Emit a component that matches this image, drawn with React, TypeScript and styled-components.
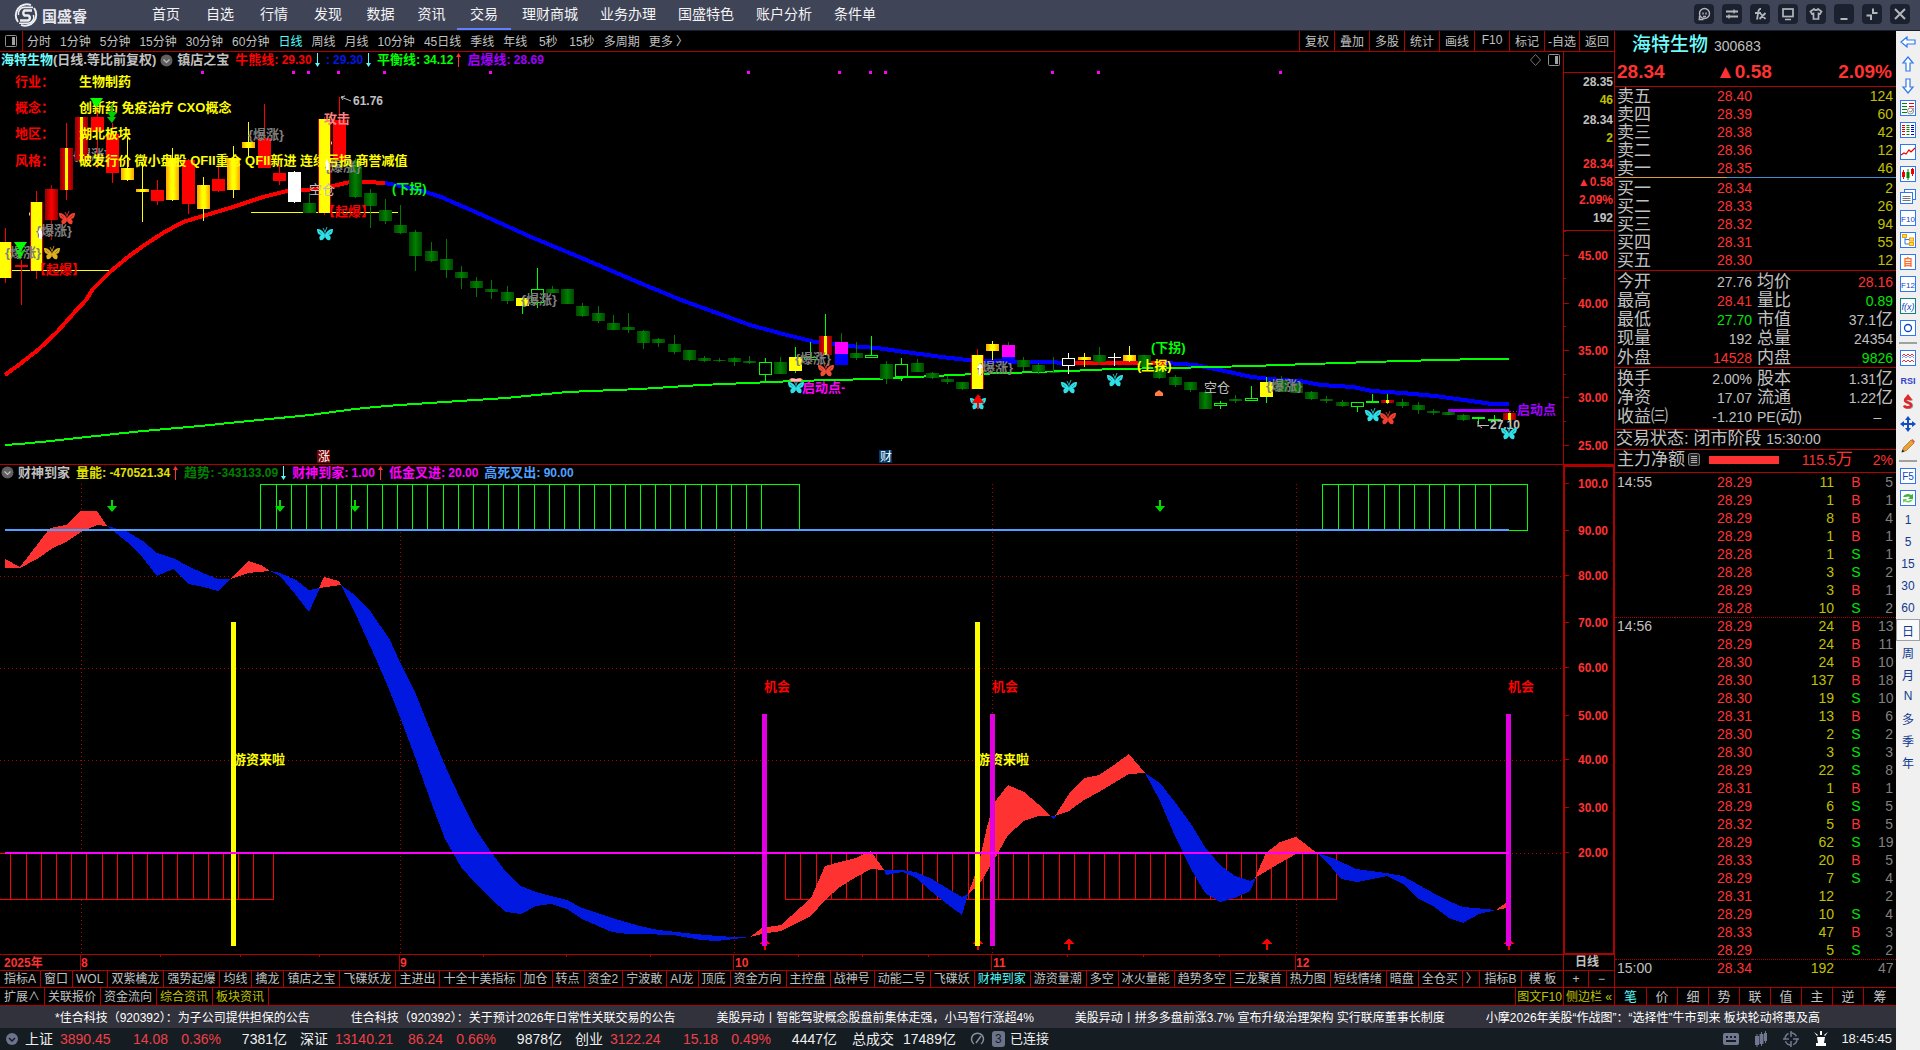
import React from 'react';
import styled, { createGlobalStyle, css } from 'styled-components';

const SANS = `"Liberation Sans", "Noto Sans CJK SC", sans-serif`;
const LINE = '#b00000';
const SILVER = '#c0c0c0';
const RED = '#ff3232';
const GREEN = '#00e600';
const YELLOW = '#c0c000';
const CYAN = '#54fcfc';

const GlobalStyle = createGlobalStyle`
  * { box-sizing: border-box; }
  body { margin: 0; background: #000; color: ${SILVER}; font-family: ${SANS}; font-size: 12px; }
  button, input { font: inherit; color: inherit; background: none; border: 0; padding: 0; margin: 0; cursor: pointer; }
  a { color: inherit; text-decoration: none; }
  svg { display: block; }
`;

/* ---------- shell ---------- */

const Page = styled.div`
  display: flex;
  flex-direction: column;
  min-height: 100vh;
  overflow: hidden;
`;
const Body = styled.div`
  display: flex;
  flex: 1;
`;
const Main = styled.main`
  display: flex;
  flex-direction: column;
  flex: 1;
  min-width: 0;
`;
const Workspace = styled.div`
  display: flex;
  flex: 1;
`;
const Charts = styled.section`
  flex: 1;
  min-width: 0;
  border-right: 1px solid ${LINE};
`;

/* ---------- title bar ---------- */

const TitleBar = styled.header`
  display: flex;
  align-items: center;
  height: 31px;
  background: #3f4456;
  border-bottom: 1px solid #1a1f30;
`;
const Brand = styled.div`
  display: flex;
  align-items: center;
  gap: 4px;
  width: 139px;
  padding-left: 14px;
  color: #e8e8ee;
  font-size: 15px;
  font-weight: 700;
`;
const Nav = styled.nav`
  display: flex;
  flex: 1;
  align-self: stretch;
`;
const NavLink = styled.a<{ $w: number; $on?: boolean }>`
  width: ${p => p.$w}px;
  line-height: 29px;
  height: 30px;
  text-align: center;
  white-space: nowrap;
  font-size: 14px;
  color: #f4f4f6;
  box-shadow: ${p => (p.$on ? 'inset 0 -2px #6080ff' : 'none')};
`;
const WindowTools = styled.div`
  display: flex;
  gap: 8px;
  padding: 0 10px 2px 0;
`;
const ToolButton = styled.button`
  display: grid;
  place-items: center;
  width: 20px;
  height: 20px;
  border-radius: 4px;
  background: #1c2130;
  color: #b4b6bc;
`;

/* ---------- period toolbar ---------- */

const Toolbar = styled.div`
  display: flex;
  height: 21px;
  border-bottom: 1px solid ${LINE};
`;
const PanelToggle = styled.button`
  display: grid;
  place-items: center;
  width: 23px;
  border-right: 1px solid ${LINE};
`;
const Periods = styled.div`
  display: flex;
  flex: 1;
  gap: 9px;
  padding-left: 4px;
  white-space: nowrap;
`;
const Period = styled.button<{ $on?: boolean }>`
  min-width: 24px;
  padding-bottom: 2px;
  color: ${p => (p.$on ? CYAN : SILVER)};
`;
const ToolCell = styled.button`
  width: 35px;
  padding-bottom: 2px;
  border-left: 1px solid ${LINE};
  text-align: center;
  white-space: nowrap;
`;

/* ---------- charts ---------- */

const ChartRow = styled.div`
  display: grid;
  grid-template-columns: minmax(0, 1fr) 51px;
  border-bottom: 1px solid ${LINE};
`;
const Plot = styled.div`
  svg.plot { width: 100%; height: auto; }
`;
const PlotHead = styled.div<{ $h: number }>`
  display: flex;
  align-items: center;
  gap: 6px;
  height: ${p => p.$h}px;
  padding: 0 0 2px 1px;
  font-size: 13px;
  font-weight: 700;
  line-height: 16px;
  white-space: nowrap;
`;
const PlotName = styled.span`
  display: flex;
  align-items: center;
  gap: 4px;
`;
const Spring = styled.span`
  flex: 1;
`;
const HeadTools = styled.span`
  display: flex;
  align-items: center;
  gap: 7px;
  padding-right: 3px;
`;
const Legend = styled.span<{ $c: string }>`
  display: inline-flex;
  align-items: center;
  gap: 3px;
  color: ${p => p.$c};
`;
const StockName = styled.span`
  color: #70fcfc;
`;
const LegendValue = styled.span`
  font-size: 12px;
`;
const AxisColumn = styled.div<{ $active?: boolean }>`
  border: 0 solid ${LINE};
  border-left-width: 1px;
  ${p => p.$active && css`border-width: 1px 0 0 1px; box-shadow: inset 0 0 0 1px ${LINE};`}
  svg.scale { width: 100%; height: auto; }
`;
const AxisGap = styled.div`
  height: 21px;
  border-bottom: 1px solid ${LINE};
`;
const AxisQuote = styled.div`
  height: 158px;
  border-bottom: 1px solid ${LINE};
  padding-right: 1px;
  text-align: right;
  font-weight: 700;
  line-height: 18px;
`;
const AxisValue = styled.div<{ $c: string; $gap?: number }>`
  color: ${p => p.$c};
  margin-top: ${p => p.$gap || 0}px;
`;
const PeriodName = styled.div`
  border-left: 1px solid ${LINE};
  padding-left: 11px;
  font-weight: 700;
  line-height: 15px;
`;

/* ---------- bottom tabs ---------- */

const TabRow = styled.div<{ $h: number }>`
  display: flex;
  height: ${p => p.$h}px;
  border-bottom: 1px solid ${LINE};
`;
const TabList = styled.div`
  display: flex;
  flex: 1;
  min-width: 0;
  overflow: hidden;
`;
const Tab = styled.button<{ $c?: string }>`
  flex: none;
  padding: 0 4px 0 3px;
  border-right: 1px solid ${LINE};
  line-height: 16px;
  white-space: nowrap;
  color: ${p => p.$c || SILVER};
  &:first-child { padding-left: 4px; }
`;
const EndTab = styled.button<{ $w: number; $c?: string }>`
  flex: none;
  width: ${p => p.$w}px;
  border-left: 1px solid ${LINE};
  line-height: 16px;
  text-align: center;
  white-space: nowrap;
  color: ${p => p.$c || SILVER};
`;

/* ---------- quote panel ---------- */

const Quote = styled.aside`
  display: flex;
  flex-direction: column;
  width: 281px;
`;
const QuoteHead = styled.div`
  height: 56px;
  border-bottom: 1px solid ${LINE};
`;
const NameLine = styled.h1`
  display: flex;
  align-items: baseline;
  gap: 6px;
  height: 27px;
  margin: 0;
  padding-left: 17px;
  line-height: 27px;
  font-size: 19px;
  font-weight: 500;
  color: #70fcfc;
`;
const Code = styled.span`
  font-size: 14px;
  font-weight: 400;
  color: ${SILVER};
`;
const PriceLine = styled.div`
  display: grid;
  grid-template-columns: 99px 1fr auto;
  padding: 0 4px 0 2px;
  line-height: 28px;
  font-size: 19px;
  font-weight: 700;
  color: ${RED};
`;
const Block = styled.div<{ $top?: number; $bottom?: number; $line?: boolean }>`
  padding: ${p => p.$top || 0}px 0 ${p => p.$bottom || 0}px;
  border-bottom: ${p => (p.$line ? `1px solid ${LINE}` : '0')};
`;
const Split = styled.div`
  display: flex;
  height: 1px;
  background: #4090d0;
`;
const SplitShare = styled.div`
  width: 40%;
  background: #e0a030;
`;
const Grid = styled.table<{ $row: number }>`
  width: 100%;
  table-layout: fixed;
  border-collapse: separate;
  border-spacing: 0;
  font-size: 14px;
  th, td {
    height: ${p => p.$row}px;
    padding: 0;
    line-height: ${p => p.$row - 1}px;
    text-align: right;
    white-space: nowrap;
    overflow: hidden;
  }
  td:last-child { padding-right: 3px; }
`;
const Label = styled.th`
  && { text-align: left; padding-left: 2px; }
  font-size: 17px;
  font-weight: 400;
`;
const Cell = styled.td<{ $c?: string }>`
  color: ${p => p.$c || SILVER};
`;
const SecondLabel = styled(Label)`
  && { padding-left: 5px; }
`;
const Unit = styled.span`
  font-size: 17px;
`;
const Latin = styled.span`
  font-size: 14px;
`;
const TickRow = styled.tr<{ $rule?: boolean }>`
  td { border-top: ${p => (p.$rule ? `1px dotted ${LINE}` : '0')}; }
`;
const TimeCell = styled(Cell)`
  && { text-align: left; padding-left: 2px; }
`;
const SideCell = styled(Cell)`
  && { text-align: center; }
`;
const StateLine = styled.div`
  padding-left: 1px;
  border-bottom: 1px solid ${LINE};
  height: 20px;
  line-height: 18px;
  font-size: 17px;
  white-space: nowrap;
`;
const FlowLine = styled.div`
  display: flex;
  align-items: center;
  height: 23px;
  padding: 0 3px 3px 2px;
  border-bottom: 1px solid ${LINE};
  font-size: 17px;
  line-height: 18px;
`;
const FlowIcon = styled.svg`
  margin-left: 3px;
`;
const FlowBar = styled.span`
  width: 70px;
  height: 8px;
  margin-left: 9px;
  background: ${RED};
`;
const FlowValue = styled.span`
  flex: 1;
  padding: 0 20px 0 0;
  text-align: right;
  color: ${RED};
`;
const FlowShare = styled.span`
  color: ${RED};
  font-size: 14px;
`;
const QuoteTabs = styled.div`
  display: grid;
  grid-template-columns: repeat(8, 31px) 1fr;
  height: 19px;
  margin-top: auto;
  border: solid ${LINE};
  border-width: 1px 0;
`;
const QuoteTab = styled.button<{ $on?: boolean }>`
  font-size: 13px;
  line-height: 16px;
  text-align: center;
  color: ${p => (p.$on ? CYAN : SILVER)};
  & + & { border-left: 1px solid ${LINE}; }
`;

/* ---------- footer ---------- */

const News = styled.div`
  display: flex;
  align-items: center;
  gap: 41px;
  height: 22px;
  padding: 0 0 2px 55px;
  overflow: hidden;
  background: #31323b;
  color: #fff;
  white-space: nowrap;
`;
const Status = styled.footer`
  display: flex;
  align-items: center;
  height: 22px;
  padding: 0 4px 0 5px;
  background: #151c22;
  color: #f0f0f0;
  font-size: 14px;
  line-height: 20px;
  white-space: nowrap;
`;
const IndexGroup = styled.div`
  display: grid;
  grid-template-columns: 35px 66px 42px 53px 1fr;
  align-items: baseline;
  width: 275px;
  text-align: right;
  padding-right: 13px;
`;
const Up = styled.span`
  color: #f04048;
`;
const IndexName = styled.span`
  text-align: left;
`;
const IndexPrice = styled(Up)`
  text-align: left;
`;
const StatusIcons = styled.div`
  display: flex;
  align-items: center;
  gap: 14px;
  margin-left: auto;
  margin-right: 12px;
  color: #707890;
`;
const Conn = styled.span`
  display: flex;
  align-items: center;
  gap: 4px;
  margin-left: 14px;
  font-size: 13px;
`;
const ConnCount = styled.span`
  width: 13px;
  height: 16px;
  margin: 0 1px 0 3px;
  border-radius: 3px;
  background: #6c748c;
  color: #151c22;
  font-size: 12px;
  line-height: 16px;
  text-align: center;
`;
const Total = styled.span`
  margin-left: 2px;
  margin-right: 9px;
`;
const Clock = styled.time`
  font-size: 13px;
`;

/* ---------- right rail ---------- */

const Rail = styled.nav`
  display: flex;
  flex-direction: column;
  width: 24px;
  background: #f0f0f0;
`;
const RailButton = styled.button<{ $on?: boolean }>`
  display: grid;
  place-items: center;
  height: 22px;
  color: #103a90;
  font-size: 12px;
  border: ${p => (p.$on ? '1px solid #a0a0a8' : '0')};
  background: ${p => (p.$on ? '#fafafa' : 'none')};
`;
const RailRule = styled.hr`
  width: 18px;
  height: 2px;
  margin: 3px auto;
  border: 0;
  background: #a0a0a0;
`;

/* ---------- price chart ---------- */

type Candle = [kind: string, high: number, low: number, top: number, bottom: number];

const candles: Candle[] = [
  ['Y', 228, 283, 242, 278], ['d', 260, 305, 265, 267], ['Y', 191, 279, 202, 271], ['R', 185, 240, 189, 220],
  ['S', 123, 200, 148, 190], ['S', 117, 161, 117, 161], ['r', 98, 168, 117, 132], ['r', 123, 183, 134, 173],
  ['y', 138, 181, 168, 180], ['y', 162, 222, 189, 192], ['r', 180, 205, 190, 201], ['y', 148, 201, 158, 200],
  ['r', 159, 214, 160, 204], ['y', 177, 221, 185, 209], ['r', 165, 192, 179, 191], ['y', 146, 198, 158, 190],
  ['y', 122, 158, 142, 148], ['r', 104, 168, 138, 168], ['r', 165, 185, 173, 181], ['w', 171, 203, 172, 202],
  ['g', 193, 213, 203, 213], ['Y', 117, 215, 119, 213], ['r', 97, 161, 120, 161], ['g', 158, 198, 161, 197],
  ['g', 189, 228, 193, 206], ['g', 199, 224, 210, 221], ['g', 205, 234, 225, 233], ['g', 230, 271, 232, 256],
  ['g', 242, 262, 251, 261], ['g', 239, 278, 259, 270], ['g', 266, 289, 272, 278], ['g', 277, 297, 281, 288],
  ['g', 280, 299, 289, 292], ['g', 286, 304, 292, 301], ['Z', 297, 314, 298, 306], ['G', 268, 308, 289, 303],
  ['g', 286, 293, 289, 293], ['g', 289, 304, 289, 304], ['g', 303, 317, 306, 316], ['g', 306, 323, 313, 321],
  ['g', 315, 330, 323, 330], ['g', 313, 333, 327, 330], ['g', 330, 349, 331, 343], ['g', 338, 347, 339, 343],
  ['g', 335, 354, 344, 352], ['g', 350, 361, 350, 360], ['g', 356, 362, 358, 361], ['g', 358, 362, 360, 361],
  ['g', 357, 366, 358, 362], ['g', 356, 364, 361, 363], ['G', 358, 381, 362, 375], ['g', 357, 374, 362, 374],
  ['Z', 347, 373, 357, 371], ['G', 342, 360, 357, 360], ['T', 314, 355, 336, 355], ['m', 333, 365, 342, 365],
  ['g', 342, 360, 353, 358], ['G', 336, 358, 355, 358], ['g', 361, 384, 364, 379], ['G', 358, 381, 364, 377],
  ['g', 359, 372, 363, 372], ['g', 372, 379, 373, 378], ['g', 376, 384, 379, 382], ['g', 382, 390, 382, 389],
  ['Y', 349, 389, 355, 389], ['y', 341, 360, 344, 351], ['m', 342, 362, 345, 362], ['g', 357, 371, 360, 367],
  ['g', 363, 374, 365, 372], ['g', 357, 373, 372, 373], ['W', 353, 374, 358, 366], ['y', 353, 367, 357, 360],
  ['g', 347, 365, 355, 362], ['c', 353, 366, 357, 358], ['y', 346, 362, 355, 361], ['g', 355, 367, 355, 367],
  ['g', 367, 379, 367, 378], ['g', 375, 387, 377, 385], ['g', 382, 392, 382, 390], ['g', 390, 409, 392, 409],
  ['G', 401, 409, 403, 406], ['g', 395, 403, 399, 401], ['G', 386, 401, 398, 401], ['Z', 377, 403, 382, 397],
  ['g', 376, 392, 380, 392], ['g', 383, 393, 383, 393], ['g', 391, 400, 392, 399], ['g', 396, 403, 399, 401],
  ['g', 400, 407, 402, 406], ['G', 402, 412, 402, 407], ['G', 394, 402, 401, 402], ['T', 394, 404, 400, 403],
  ['g', 399, 408, 402, 406], ['g', 402, 414, 405, 410], ['g', 409, 415, 411, 413], ['g', 410, 415, 412, 415],
  ['g', 414, 421, 415, 420], ['G', 417, 424, 417, 419], ['G', 415, 420, 419, 420], ['S', 411, 420, 413, 420],
];
const STEP = 15.185;
const candleX = (i: number) => Math.round(5.4 + i * STEP);

const fills: Record<string, string> = {
  r: '#f00', R: 'url(#cRed)', S: 'url(#cRed)', T: 'url(#cRed)', y: 'url(#cGold)', Y: '#ff0', Z: '#ff0', w: '#fff', g: 'url(#cGreen)',
  d: '#f00', c: '#fff', G: '#000', W: '#000', m: '#f0f',
};
const wicks: Record<string, string> = {
  r: '#f00', R: '#c00', S: '#f00', T: '#0f0', y: '#ff0', Y: '#f00', Z: '#0f0', w: '#fff', g: '#007800', d: '#f00', c: '#fff', G: '#0f0', W: '#fff', m: '#007800',
};

const CandleMark = ({ i, c }: { i: number; c: Candle }) => {
  const [k, hi, lo, top, bot] = c;
  const x = candleX(i);
  const hollow = k === 'G' || k === 'W';
  const h = Math.max(1, bot - top);
  return (
    <g shapeRendering="crispEdges">
      <rect x={x} y={hi} width={1} height={lo - hi} fill={wicks[k]} />
      {hollow ? (
        <rect x={x - 5.5} y={top + 0.5} width={12} height={Math.max(0.5, h - 1)} fill="#000" stroke={wicks[k]} />
      ) : (
        <rect x={x - 6} y={top} width={13} height={h} fill={fills[k]} />
      )}
      {k === 'Y' && <path d={`M${x - 5.5} ${top}v${h}M${x + 6.5} ${top}v${h}`} stroke="#c00" />}
      {(k === 'S' || k === 'T') && <rect x={x - 1} y={top} width={3} height={h} fill="#ff0" />}
      {k === 'm' && <rect x={x - 6} y={top + 12} width={13} height={h - 12} fill="#00f" />}
    </g>
  );
};

const Butterfly = ({ x, y, c }: { x: number; y: number; c: string }) => (
  <g transform={`translate(${x} ${y})`} fill={c}>
    <path d="M0 1C-2-4-5-5-8-5C-8-2-7 1-4 1C-6 2-6 4-5 6C-2 7 0 4 0 1Z" />
    <path d="M0 1C2-4 5-5 8-5C8-2 7 1 4 1C6 2 6 4 5 6C2 7 0 4 0 1Z" />
    <path d="M0 4V-2M0-2L-2-6M0-2L2-7" stroke={c} fill="none" opacity={0.8} />
    <path d="M-6-3L-3 0M6-3L3 0" stroke="#000" opacity={0.25} fill="none" />
  </g>
);

type NoteProps = { x: number; y: number; c: string; s?: number; w?: number; children: React.ReactNode };
const Note = ({ x, y, c, s = 13, w = 700, children }: NoteProps) => (
  <text x={x} y={y + 4} fill={c} fontSize={s} fontWeight={w} fontFamily={SANS}>{children}</text>
);

const surges = [[5, 253], [36, 231], [248, 135], [325, 167], [521, 300], [795, 359], [977, 368], [1266, 386]];
const dots = [202, 293, 308, 338, 384, 490, 748, 839, 870, 885, 1052, 1098, 1280];
const info: [string, string, number][] = [
  ['行业：', '生物制药', 82], ['概念：', '创新药 免疫治疗 CXO概念', 108], ['地区：', '湖北板块', 134],
  ['风格：', '破发行价 微小盘股 QFII重仓 QFII新进 连续亏损 商誉减值', 161],
];

const PriceChart = () => (
  <svg className="plot" viewBox="0 70 1563 394" role="img" aria-label="日线">
    <defs>
      <linearGradient id="cGreen"><stop offset="0" stopColor="#004800" /><stop offset=".5" stopColor="#008000" /><stop offset="1" stopColor="#004800" /></linearGradient>
      <linearGradient id="cRed"><stop offset="0" stopColor="#900000" /><stop offset=".5" stopColor="#f00" /><stop offset="1" stopColor="#900000" /></linearGradient>
      <linearGradient id="cGold"><stop offset="0" stopColor="#ffa000" /><stop offset=".4" stopColor="#ff0" /><stop offset=".6" stopColor="#ff0" /><stop offset="1" stopColor="#ffa000" /></linearGradient>
    </defs>
    {dots.map(x => <rect key={x} x={x - 1} y={71} width={3} height={3} fill="#f0f" />)}
    {info.map(([label, , y]) => <Note key={y} x={15} y={y} c="#f00">{label}</Note>)}
    <g fill="none" strokeLinejoin="round" shapeRendering="crispEdges">
      <path d="M11 270.5H110M251 212.5H398" stroke="#ff0" />
      <path stroke="#00f" strokeWidth={4} d="M385 183L416 189L441 197L480 214L531 237L584 259L640 283L681 300L717 313L750 325L783 334L815 342L848 346L877 348L905 352L942 357L975 361L1040 362L1074 363M1166 363L1195 365L1220 370L1252 377L1280 380L1300 381L1321 385L1353 387L1372 391L1402 393L1435 396L1464 400L1492 404L1509 404" />
      <path stroke="#f00" strokeWidth={4} d="M5 375L20 364L39 349L57 332L73 314L86 300L93 289L110 272L128 257L143 246L163 233L183 222L203 216L233 207L263 197L287 191L307 190L333 186L350 182L367 182L385 183M1074 363H1166" />
      <path stroke="#0f0" strokeWidth={2} d="M5 445L20 444L51 441L96 436L143 431L200 426L249 421L310 415L355 409L386 406L429 403L506 398L567 392L640 389L701 385L795 381L873 379L975 374L1069 371L1113 369L1171 368L1252 366L1280 365L1341 363L1402 361L1480 359H1509" />
      <path stroke="#a000ff" strokeWidth={3} d="M1448 410.5H1509" />
    </g>
    <Note x={73} y={155} c="#808080">{'{爆涨}'}</Note>
    <g fill="#fff">
      <ellipse cx={36} cy={214} rx={7} ry={4} /><ellipse cx={325} cy={143} rx={7} ry={4} />
    </g>
    {candles.map((c, i) => <CandleMark key={i} i={i} c={c} />)}
    {surges.map(([x, y]) => <Note key={x} x={x} y={y} c="#808080">{'{爆涨}'}</Note>)}
    {info.map(([, text, y]) => <Note key={y} x={79} y={y} c="#ff0">{text}</Note>)}
    <g fill="#fff">
      <path d="M38 232l2-4 2 4v7h-3v-5zM325 163l2-4 2 4v7h-3v-5zM977 368l3-5 3 5h-2v7h-2v-7z" />
    </g>
    <Note x={33} y={270} c="#f00">【起爆】</Note>
    <Note x={322} y={212} c="#f00">【起爆】</Note>
    <Note x={309} y={190} c={SILVER} w={400}>空仓</Note>
    <Note x={1204} y={388} c={SILVER} w={400}>空仓</Note>
    <Note x={392} y={189} c="#0f0">(下拐)</Note>
    <Note x={1151} y={348} c="#0f0">(下拐)</Note>
    <Note x={1137} y={366} c="#ff0">(上探)</Note>
    <Note x={324} y={119} c="#ff8080">攻击</Note>
    <Note x={353} y={101} c={SILVER} s={12}>61.76</Note>
    <path d="M351 101L341 97M341 97l4-1M341 97l2 3" stroke={SILVER} fill="none" />
    <Note x={802} y={388} c="#f0f">启动点-</Note>
    <Note x={1517} y={410} c="#a000ff">启动点</Note>
    <path d="M1510 411.5H1517" stroke="#a000ff" strokeDasharray="1 2" />
    <Note x={1490} y={425} c={SILVER} s={12}>27.10</Note>
    <path d="M1489 425.5H1478M1478 421v6M1478 425l4 3" stroke={SILVER} fill="none" />
    <rect x={317} y={450} width={13} height={13} fill="#780000" />
    <Note x={318} y={457} c="#fff" s={12} w={400}>涨</Note>
    <rect x={879} y={450} width={13} height={13} fill="#003868" />
    <Note x={880} y={457} c="#fff" s={12} w={400}>财</Note>
    <g fill="#0f0">
      <path d="M90 98h13l-6 9h-1zM14 242h13l-6 9h-1z" />
      <path d="M15 248l5 12 6-12-5 4z" opacity={0.85} />
      <path d="M111 105h2v7h4l-5 7-5-7h4zM107 117h9l-4 6z" fill="#00d000" />
    </g>
    <Butterfly x={325} y={234} c="#30e0e8" />
    <Butterfly x={67} y={218} c="#f04030" />
    <Butterfly x={52} y={253} c="#e0b020" />
    <Butterfly x={826} y={370} c="#f05038" />
    <Butterfly x={1388} y={418} c="#f04030" />
    {[[796, 387], [978, 403], [1069, 387], [1115, 380], [1373, 415], [1509, 433]].map(([x, y]) => <Butterfly key={x} x={x} y={y} c="#30e0e8" />)}
    <path d="M978 394l6 9h-5v6h-2v-6h-5z" fill="#f00" />
    <path d="M1159 390l4 3v3h-8v-3z" fill="#ff8040" />
    <path d="M789 380c2-3 5-2 7-1c2-1 5-2 7 1c-4 3-10 3-14 0z" fill="#ff8080" />
    <path d="M791 380h10" stroke="#fff" />
  </svg>
);

type ScaleMark = [y: number, label?: string];
const priceMarks: ScaleMark[] = [[232], [256, '45.00'], [279], [304, '40.00'], [327], [351, '35.00'], [375], [398, '30.00'], [422], [446, '25.00']];
const oscMarks: ScaleMark[] = [[484, '100.0'], [531, '90.00'], [576, '80.00'], [623, '70.00'], [668, '60.00'], [716, '50.00'], [760, '40.00'], [808, '30.00'], [853, '20.00']];

const Scale = ({ top, height, marks }: { top: number; height: number; marks: ScaleMark[] }) => (
  <svg className="scale" viewBox={`0 ${top} 50 ${height}`}>
    {marks.map(([y, label]) => (
      <g key={y}>
        <path d={`M0 ${y - 0.5}h${label ? 5 : 2}`} stroke={LINE} />
        {label && <Note x={14} y={y} c={RED} s={12}>{label}</Note>}
      </g>
    ))}
  </svg>
);

/* ---------- oscillator ---------- */

const upBands = [
  '5,559 20,567 50,528 66,525 81,511 97,511 107,526 97,525 81,532 66,542 53,548 37,559 20,568 5,568',
  '231,579 248,561 261,565 270,571 248,573',
  '319,588 324,577 339,581 341,585 326,587',
  '750,937 762,928 781,925 811,898 825,866 840,862 856,858 871,851 884,870 871,869 856,877 840,887 825,900 811,916 795,924 781,931 762,934',
  '968,894 978,867 987,827 994,803 1008,785 1024,792 1038,804 1050,816 1038,816 1024,821 1008,835 994,860 979,885',
  '1055,816 1069,794 1084,778 1099,775 1114,765 1129,754 1145,773 1129,774 1114,783 1099,792 1084,800 1069,811',
  '1255,878 1266,853 1280,842 1296,837 1317,853 1296,854 1280,863',
  '1496,910 1507,902 1507,908',
];
const downBands = [
  '107,526 126,531 143,541 157,553 173,558 188,566 203,573 218,579 231,579 218,591 203,587 188,584 173,569 157,576 143,558 127,542 112,530',
  '270,571 280,573 296,580 309,590 320,588 309,612 295,594 280,576',
  '341,585 355,595 371,612 390,640 400,662 415,692 431,732 447,770 461,800 475,828 491,852 506,872 521,886 536,892 551,896 567,900 582,908 612,918 640,926 658,930 685,933 717,936 734,937 750,937 734,939 717,941 701,940 673,935 640,934 628,934 612,932 598,926 582,919 567,909 551,904 536,906 521,914 506,912 491,899 475,883 461,867 445,839 431,802 415,757 400,717 386,682 371,648 355,613',
  '884,870 901,870 916,872 932,879 947,888 962,897 968,894 962,915 947,904 932,892 916,878 903,872 886,875',
  '1050,816 1053,819 1056,816',
  '1145,773 1160,783 1175,802 1191,824 1205,847 1220,865 1235,876 1250,881 1256,878 1250,891 1235,898 1220,902 1205,893 1191,869 1175,836 1160,801',
  '1317,853 1335,859 1356,869 1386,873 1403,876 1419,885 1435,894 1449,901 1463,907 1496,910 1479,914 1463,923 1449,918 1433,906 1417,898 1403,884 1387,876 1357,882 1341,879 1327,862',
];
const posts = (from: number, count: number, y: number) =>
  Array.from({ length: count }, (_, k) => `M${Math.round(from + k * STEP) + 0.5} ${y}v46`).join('');
const upArrow = (x: number) => `M${x} 938l5 6h-4v6h-2v-6h-4z`;
const downArrow = (x: number) => `M${x - 1} 500h2v6h4l-5 6l-5-6h4z`;

const Oscillator = () => (
  <svg className="plot" viewBox="0 482 1563 472" role="img" aria-label="财神到家">
    <g shapeRendering="crispEdges" fill="none">
      <path stroke={LINE} strokeDasharray="1 3" d="M0 576.5H1563M0 668.5H1563M0 760.5H1563M0 853.5H1563M81.5 484V954M400.5 484V954M734.5 484V954M992.5 484V954M1296.5 484V954" />
      <path fill="#000" stroke="#0f0" d="M260.5 484.5H799.5V530.5H260.5ZM1322.5 484.5H1527.5V530.5H1322.5Z" />
      <path stroke="#0f0" d={posts(275.5, 33, 484) + posts(1338, 11, 484)} />
      <path stroke="#f00" fill="#000" d="M-1 853.5H273.5V899.5H-1ZM785.5 853.5H1336.5V899.5H785.5Z" />
      <path stroke="#f00" d={posts(10.4, 17, 853) + posts(785.3, 36, 853)} />
    </g>
    <g shapeRendering="crispEdges">
      <path d={[765, 978, 1069, 1267, 1509].map(upArrow).join('')} fill="#f00" />
      {upBands.map(p => <polygon key={p} points={p} fill={RED} />)}
      {downBands.map(p => <polygon key={p} points={p} fill="#0018e0" />)}
      <rect x={5} y={529} width={1504} height={2} fill="#50a0ff" />
      <rect x={762} y={714} width={5} height={232} fill="#e000e0" />
      <rect x={990} y={714} width={5} height={232} fill="#e000e0" />
      <rect x={1506} y={714} width={5} height={232} fill="#e000e0" />
      <rect x={231} y={622} width={5} height={324} fill="#ff0" />
      <rect x={975} y={622} width={5} height={324} fill="#ff0" />
      <rect x={5} y={852} width={1504} height={2} fill="#f0f" />
    </g>
    <path d={[112, 280, 355, 1160].map(downArrow).join('')} fill="#00d800" />
    {[764, 992, 1508].map(x => <Note key={x} x={x} y={687} c="#f00">机会</Note>)}
    {[233, 977].map(x => <Note key={x} x={x} y={760} c="#ff0">游资来啦</Note>)}
    <rect x={990} y={752} width={5} height={16} fill="#e000e0" />
  </svg>
);

const DateScale = () => (
  <svg className="plot" viewBox="0 955 1563 15">
    <path stroke={LINE} d="M80.5 955v15M399.5 955v15M733.5 955v15M991.5 955v15M1295.5 955v15M160.5 955v2M240.5 955v2M319.5 955v2M483.5 955v2M566.5 955v2M650.5 955v2M798.5 955v2M862.5 955v2M928.5 955v2M1067.5 955v2M1143.5 955v2M1219.5 955v2" />
    <Note x={4} y={963} c={RED} s={12}>2025年</Note>
    {([[81, '8'], [400, '9'], [735, '10'], [993, '11'], [1296, '12']] as [number, string][]).map(([x, t]) => <Note key={t} x={x} y={963} c={RED} s={12}>{t}</Note>)}
  </svg>
);

/* ---------- small glyphs ---------- */

const PaneIcon = () => (
  <svg width="12" height="12" viewBox="0 0 12 12"><rect x="0.5" y="0.5" width="11" height="11" rx="1" fill="none" stroke="#909090" /><rect x="7" y="2" width="3" height="8" fill="#a0a0a0" /></svg>
);
const FoldIcon = () => (
  <svg width="13" height="13" viewBox="0 0 13 13"><circle cx="6.5" cy="6.5" r="6" fill="#606060" /><path d="M3.5 5.5l3 3 3-3" stroke="#c0c0c0" fill="none" strokeWidth="1.2" /></svg>
);
const Arrow = ({ up }: { up?: boolean }) => (
  <svg width="5" height="14" viewBox="0 0 5 14">
    <path d={up ? 'M2.5 14V3' : 'M2.5 0V11'} stroke={up ? RED : CYAN} />
    <path d={up ? 'M0 4h5L2.5 0z' : 'M0 10h5L2.5 14z'} fill={up ? RED : CYAN} />
  </svg>
);

const LogoMark = () => (
  <svg width="24" height="24" viewBox="0 0 24 24" fill="none" stroke="#eceef2">
    <path d="M17 2.2A11 11 0 0 0 4 19M7 21.8A11 11 0 0 0 20 5" strokeWidth="2" />
    <path d="M18 7.5H10.5a3.2 3.2 0 0 0 0 5H14a2.6 2.6 0 0 1 0 5H6" strokeWidth="2.4" />
    <path d="M19 4.4H10A6 6 0 0 0 4.6 12M5 20.2H14A6 6 0 0 0 19.4 12" strokeWidth="1.6" />
  </svg>
);

const windowIcons: [string, React.ReactNode][] = [
  ['客服', <><circle cx="7.5" cy="6.5" r="5" /><path d="M1.500 12.500h5M2.500 9v3.500M6 5.500v2M9 5.500v2M6 9.500h3" /></>],
  ['设置', <><path d="M1 4.5h12M1 9.5h12" strokeWidth="2" /><path d="M9 2.5v4M4 7.5v4" /></>],
  ['公式', <><path d="M8 2C5 1.500 5.500 5 4 12.500M2 6H8M7 6l5.500 6M12.500 6L6.500 12" strokeWidth="1.800" /></>],
  ['屏幕', <><rect x="2" y="2" width="10" height="7.500" strokeWidth="1.700" /><path d="M4 12.500h6" strokeWidth="1.500" /></>],
  ['皮肤', <><path d="M5 2L1.500 4.500 3 7l1.500-.500V12h5V6.500L11 7l1.500-2.500L9 2C8 3.500 6 3.500 5 2z" strokeWidth="1.700" /></>],
  ['最小化', <><path d="M3.500 12h7" strokeWidth="2" /></>],
  ['还原', <><path d="M6 13V8.500H1.500M8 1.500V6H12.500" strokeWidth="2" /></>],
  ['关闭', <><path d="M2 2l10 10M12 2L2 12" strokeWidth="2" /></>],
];

const Frame = ({ c = '#3078f0', children }: { c?: string; children: React.ReactNode }) => (
  <svg width="16" height="16" viewBox="0 0 16 16"><rect x="0.5" y="0.5" width="15" height="15" fill="#fff" stroke={c} />{children}</svg>
);
const Plain = ({ children }: { children: React.ReactNode }) => <svg width="16" height="16" viewBox="0 0 16 16">{children}</svg>;
const FrameText = ({ c = '#1048c0', w = 400, children }: { c?: string; w?: number; children: string }) => (
  <text x="8" y="12" fontSize={children.length > 2 ? 8 : 10} fontFamily={SANS} fontWeight={w} fill={c} textAnchor="middle">{children}</text>
);
const arrowOutline = { fill: '#fff', stroke: '#3078f0', strokeWidth: 1.2 };
const railIcons: ([string, React.ReactNode] | null)[] = [
  ['后退', <Plain><path d="M1 8l6-5v3h8v4H7v3z" {...arrowOutline} /></Plain>],
  ['上翻', <Plain><path d="M8 1l5 6h-3v8H6V7H3z" {...arrowOutline} /></Plain>],
  ['下翻', <Plain><path d="M8 15l5-6h-3V1H6v8H3z" {...arrowOutline} /></Plain>],
  ['报价', <Frame><path d="M2 3.500h5M2 6.500h5M2 9.500h5M2 12.500h5" stroke="#080" /><path d="M9 3.500h5M9 6.500h5" stroke="#e00" /><circle cx="10.500" cy="11" r="3" fill="#fff" stroke="#888" /><path d="M9 11l2 1 3-4" stroke="#888" fill="none" /></Frame>],
  ['列表', <Frame><g strokeDasharray="3 1"><path d="M2 3.500h3M2 5.500h3M2 7.500h3M2 9.500h3M2 12.500h3" stroke="#e00" /><path d="M6.500 3.500h3M6.500 5.500h3M6.500 7.500h3M6.500 9.500h3M6.500 12.500h3" stroke="#080" /><path d="M11 3.500h3M11 5.500h3M11 7.500h3M11 9.500h3M11 12.500h3" stroke="#00c" /></g></Frame>],
  ['分时', <Frame><path d="M1 11l3-2 2 1 3-4 2 2 4-4" stroke="#e00" fill="none" strokeWidth="1.200" /></Frame>],
  ['K线', <Frame><path d="M3.500 4v9M12.500 2v8" stroke="#e00" /><path d="M8 3v11" stroke="#080" /><rect x="2" y="6" width="3" height="5" fill="#e00" /><rect x="6.500" y="6" width="3" height="6" fill="#080" /><rect x="11" y="3" width="3" height="5" fill="#e00" /></Frame>],
  ['多窗', <Plain><rect x="4.500" y="1.500" width="11" height="10" fill="#fff" stroke="#3078f0" /><rect x="0.500" y="4.500" width="12" height="11" fill="#fff" stroke="#3078f0" /><path d="M2.500 8.500h8M2.500 10.500h8M2.500 12.500h8" stroke="#777" /></Plain>],
  ['F10', <Frame><FrameText>F10</FrameText></Frame>],
  ['分类', <Frame><path d="M5 4v8h5M5 7.500h5" stroke="#3078f0" fill="none" /><rect x="2.500" y="2.500" width="4" height="3" fill="#ffe060" stroke="#f0a000" /><rect x="9.500" y="6" width="4" height="3" fill="#ffe060" stroke="#f0a000" /><rect x="9.500" y="10.500" width="4" height="3" fill="#ffe060" stroke="#f0a000" /></Frame>],
  ['自选', <Frame><FrameText c="#ff7030" w={700}>自</FrameText></Frame>],
  ['F12', <Frame><FrameText>F12</FrameText></Frame>],
  ['函数', <Frame c="#108080"><text x="8" y="12" fontSize="9" fontStyle="italic" fontFamily={SANS} fill="#1048c0" textAnchor="middle">f(x)</text></Frame>],
  ['圆', <Frame><circle cx="8" cy="8" r="3.500" fill="none" stroke="#1048c0" strokeWidth="1.300" /></Frame>],
  null,
  ['波形', <Frame><path d="M2 6l2-2 2 2 2-2 2 2 2-2 2 2M2 12l2-2 2 2 2-2 2 2 2-2 2 2" stroke="#e03040" fill="none" /><path d="M2 8l2-2 2 2 2-2 2 2 2-2 2 2" stroke="#3060e0" fill="none" opacity="0.600" /></Frame>],
  ['RSI', <Plain><text x="8" y="12" fontSize="9" fontWeight="700" fontFamily={SANS} fill="#3040d0" textAnchor="middle">RSI</text></Plain>],
  ['资金', <Plain><g fill="none" strokeWidth="2.400"><path d="M12 6.500C11 4.500 6 4.500 6 7C6 9.500 12 8.500 12 11.500C12 14.500 6 14.500 5 12" stroke="#999" /><path d="M11 6C10 4 5 4 5 6.500C5 9 11 8 11 11C11 14 5 14 4 11.500" stroke="#e02828" /></g><path d="M5 4l3-4 3 4z" fill="#e02828" /></Plain>],
  ['移动', <Plain><path d="M8 0l3 4H9v3h3V5l4 3-4 3V9H9v3h2l-3 4-3-4h2V9H4v2L0 8l4-3v2h3V4H5z" fill="#1050c0" /></Plain>],
  ['画笔', <Plain><path d="M2 14l1.500-4.500L11 2l3 3-7.500 7.500z" fill="#f0a030" stroke="#806020" strokeWidth="0.600" /><path d="M11 2l1.500-1 2.500 2.500L14 5z" fill="#e06050" /><path d="M1.500 14.500l1-3 2 2z" fill="#222" /></Plain>],
  null,
  ['F5', <Frame><FrameText>F5</FrameText></Frame>],
  ['刷新', <Frame><path d="M3 7a5 4 0 0 1 8-2l2-1v5H8l2-2a3 2 0 0 0-4 0z" fill="#40b040" /><path d="M13 9.500a5 4 0 0 1-8 2l-2 1V9h4l-1 1.500a3 2 0 0 0 4-.500z" fill="#70d060" /></Frame>],
];

/* ---------- data ---------- */

const nav: [string, number][] = [
  ['首页', 54], ['自选', 54], ['行情', 54], ['发现', 54], ['数据', 51], ['资讯', 51], ['交易', 54],
  ['理财商城', 78], ['业务办理', 78], ['国盛特色', 78], ['账户分析', 78], ['条件单', 64],
];
const periods = ['分时', '1分钟', '5分钟', '15分钟', '30分钟', '60分钟', '日线', '周线', '月线', '10分钟', '45日线', '季线', '年线', '5秒', '15秒', '多周期', '更多 〉'];
const tools = ['复权', '叠加', '多股', '统计', '画线', 'F10', '标记', '-自选', '返回'];
const axisQuote: [string, string, number?][] = [
  ['28.35', SILVER], ['46', YELLOW], ['28.34', SILVER, 2], ['2', YELLOW],
  ['28.34', RED, 8], ['▲0.58', RED], ['2.09%', RED], ['192', SILVER],
];
const indicators = ['指标A', '窗口', 'WOL', '双紫檎龙', '强势起爆', '均线', '擒龙', '镇店之宝', '飞碟妖龙', '主进出', '十全十美指标', '加仓', '转点', '资金2', '宁波敢', 'AI龙', '顶底', '资金方向', '主控盘', '战神号', '动能二号', '飞碟妖', '财神到家', '游资量潮', '多空', '冰火量能', '趋势多空', '三龙聚首', '热力图', '短线情绪', '暗盘', '全仓买', '〉'];
const extra = ['扩展∧', '关联报价', '资金流向', '综合资讯', '板块资讯'];
const asks = [['卖五', '28.40', '124'], ['卖四', '28.39', '60'], ['卖三', '28.38', '42'], ['卖二', '28.36', '12'], ['卖一', '28.35', '46']];
const bids = [['买一', '28.34', '2'], ['买二', '28.33', '26'], ['买三', '28.32', '94'], ['买四', '28.31', '55'], ['买五', '28.30', '12']];

type Stat = [string, string, string, React.ReactNode, string, string];
const statsA: Stat[] = [
  ['今开', '27.76', SILVER, '均价', '28.16', RED],
  ['最高', '28.41', RED, '量比', '0.89', GREEN],
  ['最低', '27.70', GREEN, '市值', '37.1亿', SILVER],
  ['现量', '192', SILVER, '总量', '24354', SILVER],
  ['外盘', '14528', RED, '内盘', '9826', GREEN],
];
const statsB: Stat[] = [
  ['换手', '2.00%', SILVER, '股本', '1.31亿', SILVER],
  ['净资', '17.07', SILVER, '流通', '1.22亿', SILVER],
  ['收益㈢', '-1.210', SILVER, <><Latin>PE(</Latin>动<Latin>)</Latin></>, '–\u00a0\u00a0\u00a0', SILVER],
];
type Tick = [string, string, string, string, string];
const ticks: Tick[] = [
  ['14:55', '28.29', '11', 'B', '5'], ['', '28.29', '1', 'B', '1'], ['', '28.29', '8', 'B', '4'], ['', '28.29', '1', 'B', '1'],
  ['', '28.28', '1', 'S', '1'], ['', '28.28', '3', 'S', '2'], ['', '28.29', '3', 'B', '1'], ['', '28.28', '10', 'S', '2'],
  ['14:56', '28.29', '24', 'B', '13'], ['', '28.29', '24', 'B', '11'], ['', '28.30', '24', 'B', '10'], ['', '28.30', '137', 'B', '18'],
  ['', '28.30', '19', 'S', '10'], ['', '28.31', '13', 'B', '6'], ['', '28.30', '2', 'S', '2'], ['', '28.30', '3', 'S', '3'],
  ['', '28.29', '22', 'S', '8'], ['', '28.31', '1', 'B', '1'], ['', '28.29', '6', 'S', '5'], ['', '28.32', '5', 'B', '5'],
  ['', '28.29', '62', 'S', '19'], ['', '28.33', '20', 'B', '5'], ['', '28.29', '7', 'S', '4'], ['', '28.31', '12', '', '2'],
  ['', '28.29', '10', 'S', '4'], ['', '28.33', '47', 'B', '3'], ['', '28.29', '5', 'S', '2'], ['15:00', '28.34', '192', '', '47'],
];
const headlines = [
  '*佳合科技（920392）：为子公司提供担保的公告', '佳合科技（920392）：关于预计2026年日常性关联交易的公告',
  '美股异动丨智能驾驶概念股盘前集体走强，小马智行涨超4%', '美股异动丨拼多多盘前涨3.7% 宣布升级治理架构 实行联席董事长制度',
  '小摩2026年美股“作战图”：“选择性”牛市到来 板块轮动将惠及高',
];
const indices = [
  ['上证', '3890.45', '14.08', '0.36%', '7381亿'],
  ['深证', '13140.21', '86.24', '0.66%', '9878亿'],
  ['创业', '3122.24', '15.18', '0.49%', '4447亿'],
];

/* ---------- pieces ---------- */

const Item = ({ c, name, value, dir }: { c: string; name: string; value: string; dir?: 'up' | 'down' }) => (
  <Legend $c={c}><span>{name}:</span><LegendValue>{value}</LegendValue>{dir && <Arrow up={dir === 'up'} />}</Legend>
);

const Depth = ({ rows }: { rows: string[][] }) => (
  <Grid $row={18}>
    <colgroup><col width="60" /><col width="77" /><col /></colgroup>
    <tbody>
      {rows.map(([n, p, v]) => <tr key={n}><Label scope="row">{n}</Label><Cell $c={RED}>{p}</Cell><Cell $c={YELLOW}>{v}</Cell></tr>)}
    </tbody>
  </Grid>
);

const Stats = ({ rows }: { rows: Stat[] }) => (
  <Grid $row={19}>
    <colgroup><col width="60" /><col width="77" /><col width="64" /><col /></colgroup>
    <tbody>
      {rows.map(([a, av, ac, b, bv, bc]) => (
        <tr key={a}>
          <Label scope="row">{a}</Label>
          <Cell $c={ac}>{av}</Cell>
          <SecondLabel scope="row">{b}</SecondLabel>
          <Cell $c={bc}>{bv.replace('亿', '')}{bv.endsWith('亿') && <Unit>亿</Unit>}</Cell>
        </tr>
      ))}
    </tbody>
  </Grid>
);

const QuotePanel = () => (
  <Quote>
    <QuoteHead>
      <NameLine>海特生物<Code>300683</Code></NameLine>
      <PriceLine><span>28.34</span><span>▲0.58</span><span>2.09%</span></PriceLine>
    </QuoteHead>
    <Depth rows={asks} />
    <Split><SplitShare /></Split>
    <Block $top={1} $bottom={1} $line><Depth rows={bids} /></Block>
    <Block $top={1} $line><Stats rows={statsA} /></Block>
    <Block $top={1} $bottom={3} $line><Stats rows={statsB} /></Block>
    <StateLine>交易状态: 闭市阶段 <Latin>15:30:00</Latin></StateLine>
    <FlowLine>
      主力净额
      <FlowIcon width="12" height="13" viewBox="0 0 12 13"><rect x="0.5" y="0.5" width="11" height="12" rx="2" fill="#282828" stroke="#808080" /><path d="M3 3.500h6M3 5.500h6M3 7.500h6M3 9.500h6" stroke="#b0b0b0" /></FlowIcon>
      <FlowBar />
      <FlowValue><Latin>115.5</Latin>万</FlowValue>
      <FlowShare>2%</FlowShare>
    </FlowLine>
    <Grid $row={18}>
      <colgroup><col width="60" /><col width="77" /><col width="82" /><col width="44" /><col /></colgroup>
      <tbody>
        {ticks.map(([t, p, v, s, n], i) => (
          <TickRow key={i} $rule={i > 0 && t !== ''}>
            <TimeCell>{t}</TimeCell><Cell $c={RED}>{p}</Cell><Cell $c={YELLOW}>{v}</Cell>
            <SideCell $c={s === 'B' ? RED : GREEN}>{s}</SideCell><Cell $c="#808080">{n}</Cell>
          </TickRow>
        ))}
      </tbody>
    </Grid>
    <QuoteTabs>{'笔价细势联值主逆筹'.split('').map((t, i) => <QuoteTab key={t} $on={i === 0}>{t}</QuoteTab>)}</QuoteTabs>
  </Quote>
);

export default function App() {
  return (
    <Page>
      <GlobalStyle />
      <TitleBar>
        <Brand><LogoMark />国盛睿</Brand>
        <Nav>{nav.map(([t, w]) => <NavLink key={t} href="#" $w={w} $on={t === '交易'}>{t}</NavLink>)}</Nav>
        <WindowTools>
          {windowIcons.map(([label, icon]) => (
            <ToolButton key={label} aria-label={label}>
              <svg width="14" height="14" viewBox="0 0 14 14" fill="none" stroke="currentColor" strokeWidth="1.4">{icon}</svg>
            </ToolButton>
          ))}
        </WindowTools>
      </TitleBar>
      <Body>
        <Main>
          <Workspace>
            <Charts>
              <Toolbar>
                <PanelToggle aria-label="侧栏"><PaneIcon /></PanelToggle>
                <Periods>{periods.map(t => <Period key={t} $on={t === '日线'}>{t}</Period>)}</Periods>
                {tools.map(t => <ToolCell key={t}>{t}</ToolCell>)}
              </Toolbar>
              <ChartRow>
                <Plot>
                  <PlotHead $h={18}>
                    <PlotName>
                      <span><StockName>海特生物</StockName>(日线.等比前复权)</span>
                      <FoldIcon />
                      <span>镇店之宝</span>
                    </PlotName>
                    <Item c="#f00" name="牛熊线" value="29.30" dir="down" />
                    <Item c="#0018e0" name="" value="29.30" dir="down" />
                    <Item c="#0f0" name="平衡线" value="34.12" dir="up" />
                    <Item c="#a000ff" name="启爆线" value="28.69" />
                    <Spring />
                    <HeadTools>
                      <svg width="11" height="12" viewBox="0 0 11 12"><path d="M5.500 0.500l5 5.500-5 5.500-5-5.500z" fill="none" stroke="#707070" /></svg>
                      <PaneIcon />
                    </HeadTools>
                  </PlotHead>
                  <PriceChart />
                </Plot>
                <AxisColumn>
                  <AxisGap />
                  <AxisQuote>{axisQuote.map(([t, c, g], i) => <AxisValue key={i} $c={c} $gap={g}>{t}</AxisValue>)}</AxisQuote>
                  <Scale top={231} height={233} marks={priceMarks} />
                </AxisColumn>
              </ChartRow>
              <ChartRow>
                <Plot>
                  <PlotHead $h={17}>
                    <PlotName><FoldIcon /><span>财神到家</span></PlotName>
                    <Item c="#e0e000" name="量能" value="-470521.34" dir="up" />
                    <Item c="#008000" name="趋势" value="-343133.09" dir="down" />
                    <Item c="#f0f" name="财神到家" value="1.00" dir="up" />
                    <Item c="#f0f" name="低金叉进" value="20.00" />
                    <Item c="#50a0ff" name="高死叉出" value="90.00" />
                  </PlotHead>
                  <Oscillator />
                </Plot>
                <AxisColumn $active><Scale top={466} height={488} marks={oscMarks} /></AxisColumn>
              </ChartRow>
              <ChartRow>
                <Plot><DateScale /></Plot>
                <PeriodName>日线</PeriodName>
              </ChartRow>
              <TabRow $h={17}>
                <TabList>{indicators.map(t => <Tab key={t} $c={t === '财神到家' ? CYAN : undefined}>{t}</Tab>)}</TabList>
                <EndTab $w={42}>指标B</EndTab><EndTab $w={42}>模 板</EndTab><EndTab $w={25}>+</EndTab><EndTab $w={26}>−</EndTab>
              </TabRow>
              <TabRow $h={18}>
                <TabList>{extra.map((t, i) => <Tab key={t} $c={i > 2 ? YELLOW : undefined}>{t}</Tab>)}</TabList>
                <EndTab $w={48} $c={YELLOW}>图文F10</EndTab><EndTab $w={51} $c={YELLOW}>侧边栏 «</EndTab>
              </TabRow>
            </Charts>
            <QuotePanel />
          </Workspace>
          <News>{headlines.map(t => <a key={t} href="#">{t}</a>)}</News>
          <Status>
            <svg width="20" height="14" viewBox="0 0 20 14"><circle cx="7" cy="7" r="6" fill="#6c748c" /><path d="M4 6l3 3 3-3" stroke="#151c22" fill="none" strokeWidth="1.500" /></svg>
            {indices.map(([n, p, d, r, v]) => (
              <IndexGroup key={n}><IndexName>{n}</IndexName><IndexPrice>{p}</IndexPrice><Up>{d}</Up><Up>{r}</Up><span>{v}</span></IndexGroup>
            ))}
            <Total>总成交</Total><span>17489亿</span>
            <Conn>
              <svg width="15" height="14" viewBox="0 0 15 14" fill="none" stroke="#8890a0" strokeWidth="1.500"><path d="M4 12A6 6 0 1 1 11 12M6 11l5-7" /></svg>
              <ConnCount>3</ConnCount>已连接
            </Conn>
            <StatusIcons>
              <svg width="16" height="12" viewBox="0 0 16 12"><rect width="16" height="12" rx="2" fill="currentColor" /><path d="M3 4h2M7 4h2M11 4h2M3 8h10" stroke="#151c22" strokeWidth="2" /></svg>
              <svg width="16" height="16" viewBox="0 0 16 16" fill="currentColor"><path d="M2 5h4v9H2zM6.500 3h4v10h-4zM11 2h3v8h-3zM3.500 3h1v13h-1zM8 1h1v14H8zM12 0h1v12h-1z" /></svg>
              <svg width="16" height="16" viewBox="0 0 16 16" fill="none" stroke="currentColor" strokeWidth="1.500"><circle cx="8" cy="8" r="6" strokeDasharray="7 2" /><path d="M8 0v6M8 10v6M0 8h6M10 8h6" /></svg>
              <svg width="16" height="16" viewBox="0 0 16 16" fill="#fff"><path d="M4 6h8l-1 6h2v3H3v-3h2zM1 1l4 3-1 1zM15 1l-4 3 1 1zM7 0h2v4H7z" /></svg>
            </StatusIcons>
            <Clock>18:45:45</Clock>
          </Status>
        </Main>
        <Rail>
          {railIcons.map((r, i) => (r ? <RailButton key={i} aria-label={r[0]}>{r[1]}</RailButton> : <RailRule key={i} />))}
          {['1', '5', '15', '30', '60', '日', '周', '月', 'N', '多', '季', '年'].map(t => <RailButton key={t} $on={t === '日'}>{t}</RailButton>)}
        </Rail>
      </Body>
    </Page>
  );
}
